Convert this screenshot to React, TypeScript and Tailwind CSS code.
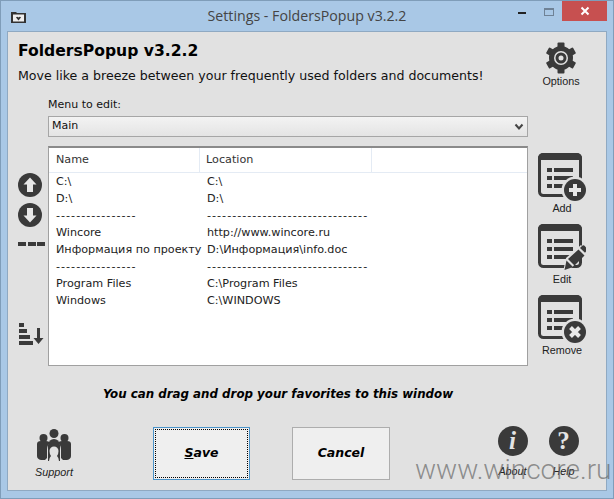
import React from 'react';

const rows = [
  ['C:\\', 'C:\\'],
  ['D:\\', 'D:\\'],
  ['----------------', '--------------------------------'],
  ['Wincore', 'http://www.wincore.ru'],
  ['Информация по проекту', 'D:\\Информация\\info.doc'],
  ['----------------', '--------------------------------'],
  ['Program Files', 'C:\\Program Files'],
  ['Windows', 'C:\\WINDOWS'],
];

const ListIcon: React.FC<{ kind: 'add' | 'edit' | 'remove' }> = ({ kind }) => (
  <svg width="48" height="48" viewBox="0 0 48 48">
    <rect x="1.5" y="1.5" width="41" height="41" rx="4" fill="none" stroke="#3a3a3a" strokeWidth="3" />
    <path d="M0 7V5a5 5 0 0 1 5-5h34a5 5 0 0 1 5 5v2z" fill="#3a3a3a" />
    <g fill="#3a3a3a">
      <rect x="9" y="15" width="5" height="4" />
      <rect x="16" y="15" width="19" height="4" />
      <rect x="9" y="23" width="5" height="4" />
      <rect x="16" y="23" width="19" height="4" />
      <rect x="9" y="31" width="5" height="4" />
      <rect x="16" y="31" width="19" height="4" />
    </g>
    {kind === 'add' && (
      <>
        <circle cx="37" cy="37" r="13.5" fill="#e1e1e1" />
        <circle cx="37" cy="37" r="11" fill="#3a3a3a" />
        <path d="M37 31v12M31 37h12" stroke="#e8e8e8" strokeWidth="4" />
      </>
    )}
    {kind === 'remove' && (
      <>
        <circle cx="37" cy="37" r="13.5" fill="#e1e1e1" />
        <circle cx="37" cy="37" r="11" fill="#3a3a3a" />
        <path d="M32.5 32.5l9 9M41.5 32.5l-9 9" stroke="#e8e8e8" strokeWidth="4" />
      </>
    )}
    {kind === 'edit' && (
      <>
        <path d="M25 48l3-14 15-13 5.500 5.500-14 16.500z" fill="#e1e1e1" />
        <path d="M26.500 46l2-9.500 6.500 6.500zM30 35l10.500-9.500 6 6-10 10z" fill="#3a3a3a" />
        <path d="M42 24l2-2a2 2 0 0 1 2.800 0l1.700 2a2 2 0 0 1 0 2.800l-1.500 2z" fill="#3a3a3a" />
      </>
    )}
  </svg>
);

const Gear = () => (
  <svg width="32" height="32" viewBox="0 0 32 32">
    <g fill="#3a3a3a">
      <rect x="12.500" y="0.500" width="7" height="31" rx="1" />
      <rect x="12.500" y="0.500" width="7" height="31" rx="1" transform="rotate(60 16 16)" />
      <rect x="12.500" y="0.500" width="7" height="31" rx="1" transform="rotate(120 16 16)" />
    </g>
    <circle cx="16" cy="16" r="9.500" fill="none" stroke="#3a3a3a" strokeWidth="5" />
    <circle cx="16" cy="16" r="7" fill="#e1e1e1" />
    <circle cx="16" cy="16" r="5.500" fill="#3a3a3a" />
    <circle cx="16" cy="16" r="2.500" fill="#e1e1e1" />
  </svg>
);

const ArrowCircle: React.FC<{ down?: boolean }> = ({ down }) => (
  <svg width="24" height="24" viewBox="0 0 24 24">
    <circle cx="12" cy="12" r="12" fill="#3a3a3a" />
    <path
      d="M12 4.500l6.500 7h-3.500v7.500h-6v-7.500h-3.500z"
      fill="#e8e8e8"
      transform={down ? 'rotate(180 12 12)' : undefined}
    />
  </svg>
);

const Sort = () => (
  <svg width="26" height="23" viewBox="0 0 26 23">
    <g fill="#3a3a3a">
      <rect x="1" y="0" width="5" height="4" />
      <rect x="1" y="6" width="8" height="4" />
      <rect x="1" y="12" width="11" height="4" />
      <rect x="1" y="18" width="14" height="4" />
      <path d="M19 5h3v10h3.500l-5 6-5-6H19z" />
    </g>
  </svg>
);

const People = () => (
  <svg width="34" height="32" viewBox="0 0 34 32">
    <g fill="#3a3a3a">
      <circle cx="17" cy="4.500" r="4.500" />
      <circle cx="6.500" cy="9" r="4" />
      <circle cx="27.500" cy="9" r="4" />
      <path d="M0 15q0-3 4-3h5q3 0 4 2-3 2-3 7v8l-2 2H4q-4-1-4-4z" />
      <path d="M34 15q0-3-4-3h-5q-3 0-4 2 3 2 3 7v8l2 2h4q4-1 4-4z" />
      <path d="M11 32V16q1-6 6-6t6 6v16z" />
      <path d="M12 32q0-3 2-5-1.500-2-1.500-5a4.500 4.500 0 0 1 9 0q0 3-1.500 5 2 2 2 5z" fill="#e1e1e1" />
    </g>
  </svg>
);

const Round: React.FC<{ children: React.ReactNode; label: string }> = ({ children, label }) => (
  <div className="flex w-[51px] flex-col items-center">
    <div className="flex h-[30px] w-[30px] items-center justify-center rounded-full bg-[#3a3a3a] font-['Liberation_Serif',serif] text-[25px] font-bold text-[#e4e4e4]">
      {children}
    </div>
    <span className="mt-[8px] font-['Liberation_Sans',sans-serif] text-[10.800px] leading-[14px] text-[#222] italic">{label}</span>
  </div>
);

const SideButton: React.FC<{ kind: 'add' | 'edit' | 'remove'; label: string }> = ({ kind, label }) => (
  <div className="flex h-[72px] w-[48px] flex-col items-start">
    <ListIcon kind={kind} />
    <span className="w-[48px] text-center font-['Liberation_Sans',sans-serif] text-[10.800px] leading-[14px] whitespace-nowrap text-[#222]">{label}</span>
  </div>
);

export default function App() {
  return (
    <div className="relative flex h-[499px] w-[614px] flex-col overflow-hidden border border-[#7f9db9] bg-[#a9c8e6] font-['DejaVu_Sans',sans-serif]">
      <div className="relative flex h-[30px] shrink-0 items-center justify-center">
        <svg className="absolute top-[10px] left-[10px]" width="15" height="12" viewBox="0 0 15 12">
          <path d="M0 1h5l1 1h9v10H0z" fill="#333" />
          <rect x="2" y="3.500" width="11" height="7" fill="#eee" />
          <path d="M7.500 9.500L5 6.500q1-1.500 2.500 0 1.500-1.500 2.500 0z" fill="#333" />
        </svg>
        <span className="font-['Open_Sans',sans-serif] text-[14.200px] text-[#444]">Settings - FoldersPopup v3.2.2</span>
        <div className="absolute top-0 right-[6px] flex items-start">
          <div className="mt-[11px] mr-[18px] h-[2px] w-[8px] bg-[#222]" />
          <div className="mt-[7px] mr-[8px] h-[8px] w-[10px] border border-t-2 border-[#6f8296]" />
          <div className="flex h-[20px] w-[45px] items-center justify-center bg-[#c75050]">
            <svg width="10" height="10" viewBox="0 0 10 10">
              <path d="M1.500 1.500l7 7M8.500 1.500l-7 7" stroke="#fff" strokeWidth="2" />
            </svg>
          </div>
        </div>
      </div>

      <div className="mx-[6px] mb-[7px] flex flex-1 flex-col border border-[#8fa9c2] bg-[#e1e1e1]">
        <div className="flex h-[66px] shrink-0 justify-between">
          <div className="pt-[8px] pl-[10px]">
            <h1 className="text-[15.600px] leading-[22px] font-bold text-black">FoldersPopup v3.2.2</h1>
            <p className="mt-[5px] text-[12.600px] leading-[18px] text-[#111]">
              Move like a breeze between your frequently used folders and documents!
            </p>
          </div>
          <div className="flex w-[90px] flex-col items-center pt-[10px]">
            <Gear />
            <span className="font-['Liberation_Sans',sans-serif] text-[10.800px] leading-[14px] text-[#222]">Options</span>
          </div>
        </div>

        <div className="pl-[40px]">
          <label className="block text-[11px] leading-[14px] text-[#111]">Menu to edit:</label>
          <div className="mt-[4px] flex h-[21px] w-[480px] items-center justify-between border border-[#a6a6a6] bg-gradient-to-b from-[#f3f3f3] to-[#e4e4e4] px-[3px]">
            <span className="text-[11px] text-[#111]">Main</span>
            <svg width="10" height="8" viewBox="0 0 10 8">
              <path d="M1.500 1.500L5 5.500l3.500-4" fill="none" stroke="#444" strokeWidth="2" />
            </svg>
          </div>
        </div>

        <div className="mt-[9px] flex h-[220px] shrink-0">
          <div className="flex w-[40px] flex-col pt-[27px] pl-[10px]">
            <ArrowCircle />
            <div className="h-[6px]" />
            <ArrowCircle down />
            <div className="mt-[15px] flex gap-[1.500px]">
              <div className="h-[4px] w-[8px] bg-[#3a3a3a]" />
              <div className="h-[4px] w-[8px] bg-[#3a3a3a]" />
              <div className="h-[4px] w-[8px] bg-[#3a3a3a]" />
            </div>
            <div className="mt-[77px]">
              <Sort />
            </div>
          </div>

          <div className="w-[480px] border border-t-2 border-[#a0a0a0] border-t-[#8a8a8a] bg-white">
            <div className="flex h-[25px] border-b border-[#e4ebf4] text-[11.200px] text-[#333]">
              <div className="flex w-[151px] items-center border-r border-[#e4ebf4] pl-[7px]">Name</div>
              <div className="flex w-[172px] items-center border-r border-[#e4ebf4] pl-[6px]">Location</div>
            </div>
            <div className="pt-[1px]">
              {rows.map(([name, location], i) => (
                <div
                  key={i}
                  className={name.startsWith('-') ? 'flex h-[17px] items-center text-[11.200px] tracking-[1px] text-[#222]' : 'flex h-[17px] items-center text-[11.200px] text-[#222]'}
                >
                  <div className="w-[151px] pl-[7px] whitespace-nowrap">{name}</div>
                  <div className="pl-[7px] whitespace-nowrap">{location}</div>
                </div>
              ))}
            </div>
          </div>

          <div className="flex flex-col pt-[7px] pl-[10px]">
            <SideButton kind="add" label="Add" />
            <SideButton kind="edit" label="Edit" />
            <SideButton kind="remove" label="Remove" />
          </div>
        </div>

        <p className="mt-[20px] pl-[95px] text-[11.840px] leading-[16px] font-bold text-black italic">
          You can drag and drop your favorites to this window
        </p>

        <div className="mt-[25px] flex items-start">
          <div className="flex w-[145px] flex-col items-center pt-[2px] pr-[53px]">
            <People />
            <span className="mt-[4px] font-['Liberation_Sans',sans-serif] text-[10.800px] leading-[14px] text-[#222] italic">Support</span>
          </div>
          <button className="flex h-[53px] w-[97px] items-center justify-center border border-[#4a93c9] bg-[#efefef] p-[1px]">
            <span className="flex h-full w-full items-center justify-center border border-dotted border-black text-[12.500px] font-bold text-black italic">
              <span className="underline">S</span>ave
            </span>
          </button>
          <button className="ml-[42px] h-[53px] w-[98px] border border-[#adadad] bg-[#efefef] text-[12.500px] font-bold text-black italic">
            Cancel
          </button>
          <div className="-mt-[1px] ml-[97px] flex">
            <Round label="About"><span className="italic">i</span></Round>
            <Round label="Help">?</Round>
          </div>
        </div>
      </div>

      <span className="pointer-events-none absolute top-[449px] left-[414px] font-['Roboto',sans-serif] text-[28px] leading-[40px] font-light text-[#666]/70">
        www.wincore.ru
      </span>
    </div>
  );
}
